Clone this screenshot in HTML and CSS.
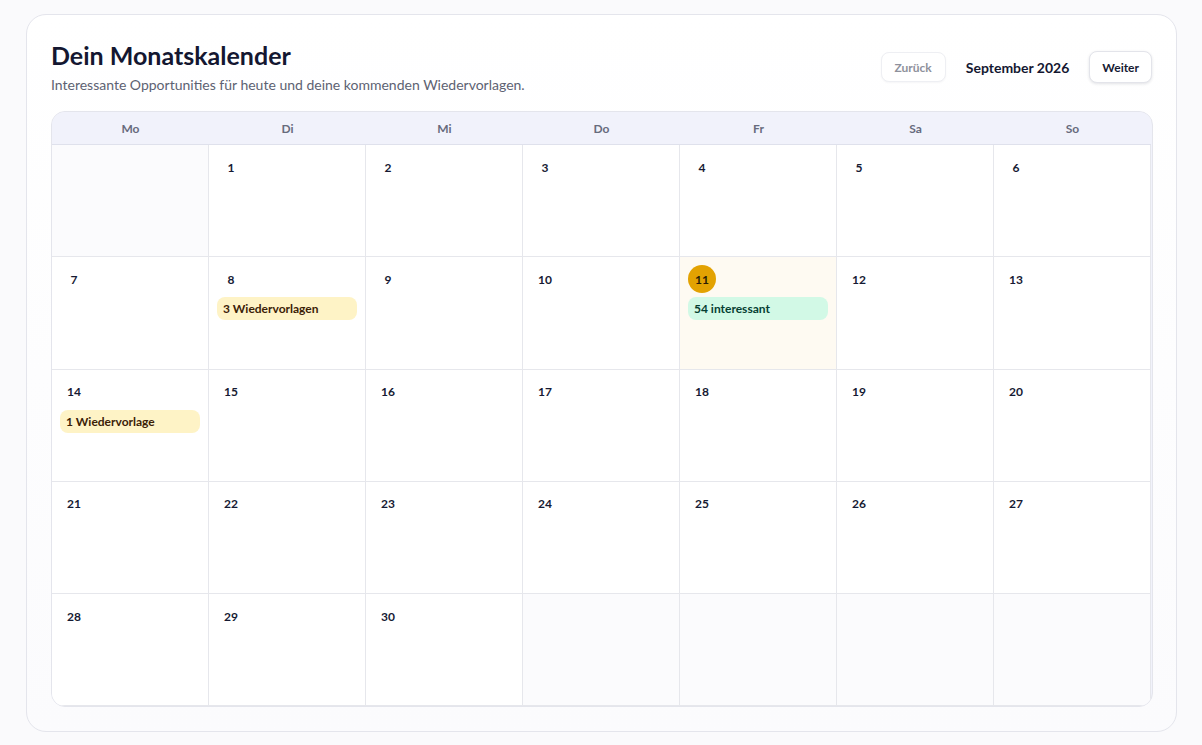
FILE: index.html
```html
<!DOCTYPE html>
<html lang="de">
<head>
    <meta charset="UTF-8">
    <meta name="viewport" content="width=device-width, initial-scale=1.0">
    <title>Dein Monatskalender</title>
    <link rel="stylesheet" href="styles.css">
</head>
<body>
    <div class="calendar-card">
        <div class="calendar-top">
            <div>
                <h1>Dein Monatskalender</h1>
                <p class="subtitle">Interessante Opportunities für heute und deine kommenden Wiedervorlagen.</p>
            </div>
            <div class="month-nav">
                <button class="nav-button" disabled>Zurück</button>
                <span class="month-label">September 2026</span>
                <button class="nav-button">Weiter</button>
            </div>
        </div>

        <div class="calendar-grid">
            <div class="weekday">Mo</div>
            <div class="weekday">Di</div>
            <div class="weekday">Mi</div>
            <div class="weekday">Do</div>
            <div class="weekday">Fr</div>
            <div class="weekday">Sa</div>
            <div class="weekday">So</div>

            <!-- week 1 -->
            <div class="day outside"></div>
            <div class="day"><span class="day-num">1</span></div>
            <div class="day"><span class="day-num">2</span></div>
            <div class="day"><span class="day-num">3</span></div>
            <div class="day"><span class="day-num">4</span></div>
            <div class="day"><span class="day-num">5</span></div>
            <div class="day"><span class="day-num">6</span></div>

            <!-- week 2 -->
            <div class="day"><span class="day-num">7</span></div>
            <div class="day">
                <span class="day-num">8</span>
                <div class="pill pill-followup">3 Wiedervorlagen</div>
            </div>
            <div class="day"><span class="day-num">9</span></div>
            <div class="day"><span class="day-num">10</span></div>
            <div class="day today">
                <span class="day-num">11</span>
                <div class="pill pill-interesting">54 interessant</div>
            </div>
            <div class="day"><span class="day-num">12</span></div>
            <div class="day"><span class="day-num">13</span></div>

            <!-- week 3 -->
            <div class="day">
                <span class="day-num">14</span>
                <div class="pill pill-followup">1 Wiedervorlage</div>
            </div>
            <div class="day"><span class="day-num">15</span></div>
            <div class="day"><span class="day-num">16</span></div>
            <div class="day"><span class="day-num">17</span></div>
            <div class="day"><span class="day-num">18</span></div>
            <div class="day"><span class="day-num">19</span></div>
            <div class="day"><span class="day-num">20</span></div>

            <!-- week 4 -->
            <div class="day"><span class="day-num">21</span></div>
            <div class="day"><span class="day-num">22</span></div>
            <div class="day"><span class="day-num">23</span></div>
            <div class="day"><span class="day-num">24</span></div>
            <div class="day"><span class="day-num">25</span></div>
            <div class="day"><span class="day-num">26</span></div>
            <div class="day"><span class="day-num">27</span></div>

            <!-- week 5 -->
            <div class="day"><span class="day-num">28</span></div>
            <div class="day"><span class="day-num">29</span></div>
            <div class="day"><span class="day-num">30</span></div>
            <div class="day outside"></div>
            <div class="day outside"></div>
            <div class="day outside"></div>
            <div class="day outside"></div>
        </div>
    </div>
</body>
</html>
```

FILE: styles.css
```css
* {
    margin: 0;
    padding: 0;
    box-sizing: border-box;
}

body {
    font-family: Lato, "Noto Sans", sans-serif;
    background: #fafafc;
    color: #161a33;
    padding: 14px 25px 14px 26px;
}

.calendar-card {
    background: linear-gradient(180deg, #ffffff 0%, #fbfbfd 100%);
    border: 1px solid #e4e5ec;
    border-radius: 20px;
    padding: 24px;
}

.calendar-top {
    display: flex;
    align-items: center;
    justify-content: space-between;
    margin-bottom: 16px;
}

h1 {
    font-size: 25px;
    line-height: 32px;
    font-weight: 700;
    color: #141731;
}

.subtitle {
    margin-top: 4px;
    font-size: 14px;
    line-height: 20px;
    color: #5d6272;
}

.month-nav {
    display: flex;
    align-items: center;
    gap: 20px;
}

.nav-button {
    font-family: inherit;
    font-size: 12px;
    font-weight: 700;
    color: #161a33;
    background: #ffffff;
    border: 1px solid #e3e4ea;
    border-radius: 8px;
    height: 32px;
    padding: 0 12px;
    box-shadow: 0 1px 3px rgba(20, 23, 49, 0.12);
    cursor: pointer;
}

.nav-button:disabled {
    color: #8e919c;
    border-color: #eeeff3;
    box-shadow: 0 1px 2px rgba(20, 23, 49, 0.04);
    height: 30px;
    padding: 0 13px;
    cursor: default;
}

.month-label {
    font-size: 14px;
    font-weight: 700;
    color: #141731;
}

/* 7 columns, header row + 5 week rows */
.calendar-grid {
    display: grid;
    grid-template-columns: repeat(7, 157px);
    grid-template-rows: 33px;
    grid-auto-rows: 112.3px;
    border: 1px solid #e4e5ec;
    border-radius: 14px;
    overflow: hidden;
    background: #f1f2fb;
    width: 1102px;
}

.weekday {
    display: flex;
    align-items: center;
    justify-content: center;
    font-size: 12px;
    font-weight: 700;
    color: #676b7d;
    background: #f1f2fb;
    border-bottom: 1px solid #dfe1ec;
}

.day {
    background: #ffffff;
    border-right: 1px solid #e6e7ec;
    border-bottom: 1px solid #e6e7ec;
    padding: 8px;
}

.day.outside {
    background: #fbfbfd;
}

.day.today {
    background: #fefaf2;
}

.day-num {
    display: flex;
    align-items: center;
    justify-content: center;
    width: 28px;
    height: 28px;
    border-radius: 50%;
    font-size: 12px;
    font-weight: 700;
    color: #161a33;
}

.today .day-num {
    background: #e3a202;
    color: #2b1d05;
}

.pill {
    margin-top: 4px;
    height: 23px;
    line-height: 23px;
    padding: 0 6px;
    border-radius: 8px;
    font-size: 12px;
    font-weight: 700;
}

.pill-followup {
    background: #fef3c6;
    color: #3b2106;
}

.pill-interesting {
    background: #d2f9e6;
    color: #063f33;
}
```
